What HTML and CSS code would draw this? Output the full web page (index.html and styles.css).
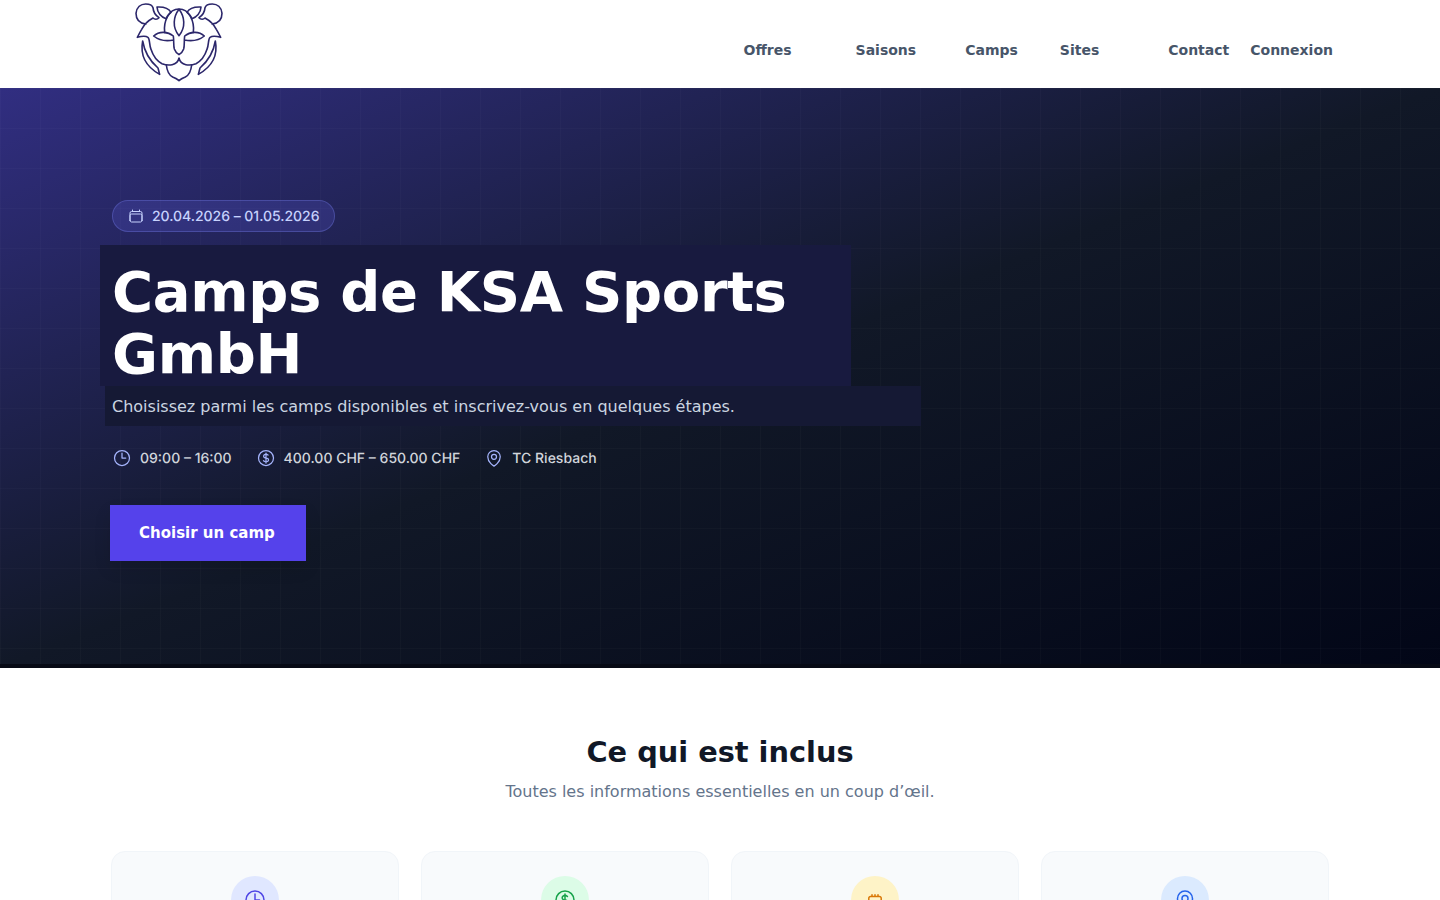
FILE: index.html
```html
<!DOCTYPE html>
<html lang="fr">
<head>
<meta charset="utf-8">
<title>Camps de KSA Sports GmbH</title>
<link rel="stylesheet" href="styles.css">
</head>
<body>
<svg class="sprite" aria-hidden="true">
  <symbol id="clock" viewBox="0 0 24 24"><path d="M12 6v6h4.5m4.5 0a9 9 0 1 1-18 0 9 9 0 0 1 18 0Z"/></symbol>
  <symbol id="dollar" viewBox="0 0 24 24"><path d="M12 6v12m-3-2.818.879.659c1.171.879 3.07.879 4.242 0 1.172-.879 1.172-2.303 0-3.182C13.536 12.219 12.768 12 12 12c-.725 0-1.45-.22-2.003-.659-1.106-.879-1.106-2.303 0-3.182s2.9-.879 4.006 0l.415.33M21 12a9 9 0 1 1-18 0 9 9 0 0 1 18 0Z"/></symbol>
  <symbol id="pin" viewBox="0 0 24 24"><path d="M15 10.5a3 3 0 1 1-6 0 3 3 0 0 1 6 0Z"/><path d="M19.5 10.5c0 7.142-7.5 11.25-7.5 11.25S4.500 17.642 4.500 10.500a7.500 7.500 0 1 1 15 0Z"/></symbol>
  <symbol id="calendar" viewBox="0 0 24 24"><path d="M6.75 3v2.250M17.250 3v2.250M3 18.750V7.500a2.250 2.250 0 0 1 2.250-2.250h13.500A2.250 2.250 0 0 1 21 7.500v11.250m-18 0A2.250 2.250 0 0 0 5.250 21h13.500A2.250 2.250 0 0 0 21 18.750m-18 0v-7.500A2.250 2.250 0 0 1 5.250 9h13.500A2.250 2.250 0 0 1 21 11.250v7.500"/></symbol>
  <symbol id="meal" viewBox="0 0 24 24"><path d="M9 6.750v1.750M12 6.750v1.750M15 6.750v1.750M7.500 8.500h9a1.700 1.700 0 0 1 1.700 1.700V16a2 2 0 0 1-2 2H7.800a2 2 0 0 1-2-2v-5.800a1.700 1.700 0 0 1 1.700-1.700Z"/></symbol>
</svg>

<header class="header">
  <a class="logo" href="#" aria-label="Accueil">
    <svg viewBox="0 0 360 264" width="120" height="88">
      <path d="M78 72C56 70 48 56 48 40C50 22 62 12 77 12C88 12 97 16 99 23C100 38 109 48 117 53C111 60 103 58 99 54C88 60 72 74 65 88C60 96 56 104 52 112C66 108 80 109 84 112C90 116 87 134 93 148C100 170 112 184 126 191C144 198 172 198 177 174C182 198 210 198 228 191C242 184 254 170 261 148C267 134 264 116 270 112C274 109 288 108 302 112C298 104 294 96 289 88C282 74 266 60 255 54C251 58 243 60 237 53C245 48 254 38 255 23C257 16 266 12 277 12C292 12 304 22 306 40C306 56 298 70 276 72"/>
      <path d="M134 97C130 66 145 27 177 27C209 27 224 66 220 97"/>
      <path d="M177 28C160 50 156 82 177 107C198 82 194 50 177 28Z"/>
      <path d="M111 21C130 20 147 26 153 37C144 44 140 50 138 56C124 52 112 39 111 21ZM243 21C224 20 207 26 201 37C210 44 214 50 216 56C230 52 242 39 243 21Z"/>
      <path d="M101 108C118 92 144 95 160 108C162 122 160 137 163 147C166 156 171 160 177 164C183 160 188 156 191 147C194 137 192 122 194 108C210 95 236 92 253 108C236 122 213 124 193 120M101 108C118 122 141 124 161 120"/>
      <path d="M68 123C60 165 74 198 119 223L114 204C90 183 74 160 68 123ZM286 123C294 165 280 198 235 223L240 204C264 183 280 160 286 123Z"/>
      <path d="M139 195C141 213 148 226 158 231C166 234 172 237 177 242C182 237 188 234 196 231C206 226 213 213 215 195"/>
    </svg>
  </a>
  <nav class="nav">
    <a class="offers" href="#">Offres</a><a class="seasons" href="#">Saisons</a><a class="camps" href="#">Camps</a><a class="sites" href="#">Sites</a><a class="contact" href="#">Contact</a><a href="#">Connexion</a>
  </nav>
</header>

<main>
  <section class="hero">
    <div class="hero-content">
      <div class="badge"><svg class="icon-sm"><use href="#calendar"/></svg><span>20.04.2026 – 01.05.2026</span></div>
      <h1>Camps de KSA Sports GmbH</h1>
      <p class="lead">Choisissez parmi les camps disponibles et inscrivez-vous en quelques étapes.</p>
      <ul class="meta">
        <li><svg class="icon-md"><use href="#clock"/></svg><span>09:00 – 16:00</span></li>
        <li><svg class="icon-md"><use href="#dollar"/></svg><span>400.00 CHF – 650.00 CHF</span></li>
        <li><svg class="icon-md"><use href="#pin"/></svg><span>TC Riesbach</span></li>
      </ul>
      <a class="cta" href="#">Choisir un camp</a>
    </div>
  </section>

  <section class="included">
    <h2>Ce qui est inclus</h2>
    <p class="intro">Toutes les informations essentielles en un coup d’œil.</p>
    <div class="cards">
      <article class="card"><span class="circle indigo"><svg class="icon-lg"><use href="#clock"/></svg></span></article>
      <article class="card"><span class="circle green"><svg class="icon-lg"><use href="#dollar"/></svg></span></article>
      <article class="card"><span class="circle amber"><svg class="icon-lg"><use href="#meal"/></svg></span></article>
      <article class="card"><span class="circle blue"><svg class="icon-lg"><use href="#pin"/></svg></span></article>
    </div>
  </section>
</main>
</body>
</html>
```
FILE: styles.css
```css
* { box-sizing: border-box; }
html, body { height: 900px; overflow: hidden; }
body { margin: 0; background: #fff; font-family: Inter, sans-serif; color: #111827; }
a { color: inherit; text-decoration: none; }
svg { display: block; flex: none; fill: none; stroke: currentColor; stroke-width: 1.5; stroke-linecap: round; stroke-linejoin: round; }
.sprite { position: absolute; width: 0; height: 0; }
.icon-sm { width: 16px; height: 16px; }
.icon-md { width: 20px; height: 20px; }
.icon-lg { width: 24px; height: 24px; }

.header { display: flex; justify-content: space-between; height: 88px; padding: 0 107px 0 120px; }
.logo svg { color: #2c276b; stroke-width: 4.8; }
.nav { display: flex; align-items: center; padding-top: 12px; font: bold 14px/20px "DejaVu Sans", sans-serif; color: #475569; }
.offers { margin-right: 64px; }
.seasons { margin-right: 49px; }
.camps { margin-right: 42px; }
.sites { margin-right: 69px; }
.contact { margin-right: 21px; }

.hero {
  height: 580px;
  padding: 112px 100px 0;
  border-bottom: 4px solid #070a15;
  background:
    linear-gradient(to right, rgba(255, 255, 255, .018) 1px, transparent 1px) 0 0 / 40px 40px,
    linear-gradient(to bottom, rgba(255, 255, 255, .018) 1px, transparent 1px) 0 0 / 40px 40px,
    linear-gradient(to bottom right, #312e81, #111827 50%, #020617) border-box;
}
.hero-content { display: flex; flex-direction: column; align-items: flex-start; }
.badge { display: flex; align-items: center; gap: 8px; width: 223px; height: 32px; margin-left: 12px; padding: 0 15px; border: 1px solid rgba(129, 140, 248, .3); border-radius: 16px; background: rgba(99, 102, 241, .2); color: #c7d2fe; font-size: 14px; font-weight: 500; line-height: 20px; letter-spacing: -.03px; white-space: nowrap; text-rendering: geometricPrecision; }
.badge span, .meta span { padding-top: 1px; }
h1 { width: 751px; height: 141px; margin: 13px 0 0; padding: 16px 12px 0; background: #181a3f; color: #fff; font: bold 56px/61.6px "DejaVu Sans", sans-serif; letter-spacing: -.33px; }
.lead { width: 816px; height: 40px; margin: 0 0 0 5px; padding: 0 7px; background: #151934; color: #cbd5e1; font: 16px/42px "DejaVu Sans", sans-serif; }
.meta { display: flex; gap: 24px; height: 20px; margin: 22px 0 0 12px; padding: 0; list-style: none; color: #d1d5db; font-size: 14px; font-weight: 500; line-height: 20px; text-rendering: geometricPrecision; }
.meta li { display: flex; gap: 8px; }
.meta svg { color: #a5b4fc; }
.cta { width: 196px; height: 56px; margin: 37px 0 0 10px; padding-left: 29px; background: #5542eb; color: #fff; font: bold 15px/56px "DejaVu Sans", sans-serif; box-shadow: 0 8px 16px rgba(0, 0, 0, .1); }

.included { height: 232px; overflow: hidden; padding: 64px 111px 0; text-align: center; }
h2 { margin: 0; font: bold 28.8px/40px "DejaVu Sans", sans-serif; }
.intro { margin: 8px 0 0; color: #64748b; font: 16px/24px "DejaVu Sans", sans-serif; }
.cards { display: grid; grid-template-columns: repeat(4, 288px); gap: 22px; margin-top: 47px; }
.card { display: flex; justify-content: center; height: 220px; padding-top: 24px; border: 1px solid #f1f5f9; border-radius: 14px; background: #f8fafc; }
.circle { display: grid; place-items: center; width: 48px; height: 48px; border-radius: 50%; }
.indigo { background: #e0e7ff; color: #4f46e5; }
.green { background: #dcfce7; color: #16a34a; }
.amber { background: #fef3c7; color: #d97706; }
.blue { background: #dbeafe; color: #2563eb; }
```
